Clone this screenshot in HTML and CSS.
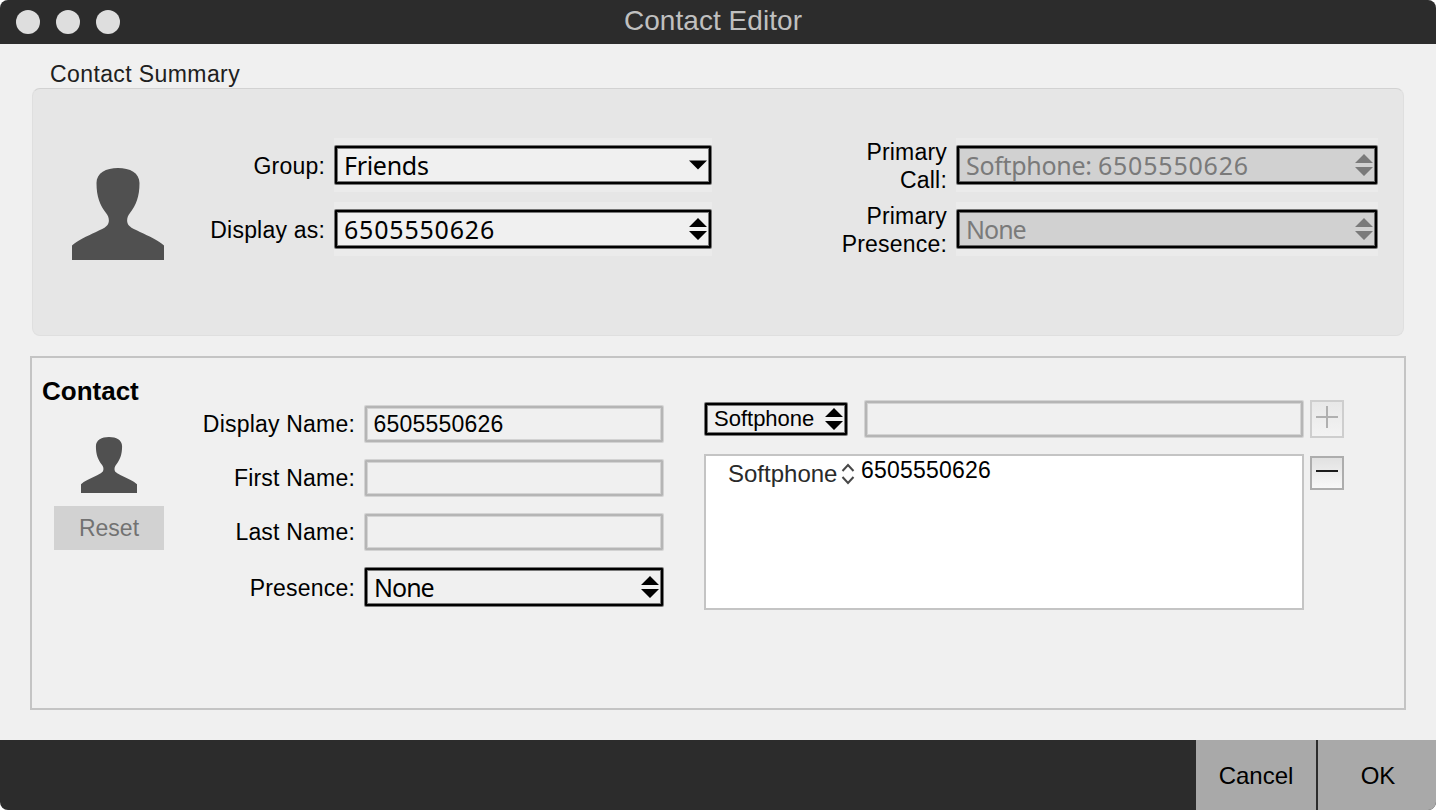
FILE: index.html
```html
<!DOCTYPE html>
<html lang="en">
<head>
<meta charset="utf-8">
<title>Contact Editor</title>
<link rel="stylesheet" href="styles.css">
</head>
<body>
<svg class="defs" width="0" height="0">
  <symbol id="person" viewBox="0 0 92 92">
    <path d="M46 0C58 0 67.500 5 67.500 15C67.500 29 64 37 58 45C54.500 49 54 55 57.500 58C60 60.500 63 61.500 68 64C77 68 87 73 92 77.500V92H0V77.500C5 73 15 68 24 64C29 61.500 32 60.500 34.500 58C38 55 37.500 49 34 45C28 37 24.500 29 24.500 15C24.500 5 34 0 46 0Z" fill="#505050"/>
  </symbol>
  <symbol id="updown" viewBox="0 0 18 22">
    <path d="M0 9L9 0L18 9ZM0 13H18L9 22Z" fill="currentColor"/>
  </symbol>
</svg>
<div class="window">
  <header class="titlebar">
    <div class="lights"><i class="light"></i><i class="light"></i><i class="light"></i></div>
    <h1 class="title">Contact Editor</h1>
  </header>
  <main class="content">
    <h2 class="summary-title">Contact Summary</h2>
    <section class="summary">
      <svg class="avatar"><use href="#person"/></svg>
      <div class="fields fields-left">
        <div class="row"><span class="label">Group:</span><div class="halo"><div class="select"><span class="word">Friends</span><svg class="arrow down" viewBox="0 0 18 10"><path d="M0 .5H18L9 9.500Z" fill="#000"/></svg></div></div></div>
        <div class="row"><span class="label">Display as:</span><div class="halo"><div class="select"><span>6505550626</span><svg class="arrow"><use href="#updown"/></svg></div></div></div>
      </div>
      <div class="fields fields-right">
        <div class="row"><span class="label">Primary<br>Call:</span><div class="halo"><div class="select disabled"><span><span class="word">Softphone: </span>6505550626</span><svg class="arrow"><use href="#updown"/></svg></div></div></div>
        <div class="row"><span class="label">Primary<br>Presence:</span><div class="halo"><div class="select disabled"><span class="none">None</span><svg class="arrow"><use href="#updown"/></svg></div></div></div>
      </div>
    </section>
    <section class="contact">
      <div class="profile">
        <h2 class="contact-title">Contact</h2>
        <svg class="avatar-small"><use href="#person"/></svg>
        <div class="reset">Reset</div>
      </div>
      <div class="details">
        <div class="detail"><span class="label">Display Name:</span><div class="input">6505550626</div></div>
        <div class="detail"><span class="label">First Name:</span><div class="input"></div></div>
        <div class="detail"><span class="label">Last Name:</span><div class="input"></div></div>
        <div class="detail"><span class="label">Presence:</span><div class="select"><span class="none">None</span><svg class="arrow"><use href="#updown"/></svg></div></div>
      </div>
      <div class="numbers">
        <div class="number-entry">
          <div class="select type"><span>Softphone</span><svg class="arrow"><use href="#updown"/></svg></div>
          <div class="input"></div>
          <div class="tool add"><svg viewBox="0 0 30 34"><path d="M4 15H26M15 4V26" stroke="#b0b0b0" stroke-width="2"/></svg></div>
        </div>
        <div class="number-list">
          <div class="list">
            <span class="list-type">Softphone</span>
            <svg class="chevrons" viewBox="0 0 14 22"><path d="M1.500 8L7 2L12.500 8M1.500 14L7 20L12.500 14" fill="none" stroke="#484848" stroke-width="2"/></svg>
            <span class="list-number">6505550626</span>
          </div>
          <div class="tool remove"><svg viewBox="0 0 30 30"><path d="M4 13H26" stroke="#1c1c1c" stroke-width="2"/></svg></div>
        </div>
      </div>
    </section>
  </main>
  <footer class="footer">
    <div class="button">Cancel</div>
    <div class="button ok">OK</div>
  </footer>
</div>
</body>
</html>
```

FILE: styles.css
```css
* { box-sizing: border-box; }
body {
  margin: 0;
  background: #fff;
  color: #000;
  font-family: "Liberation Sans", Arial, sans-serif;
  font-size: 23px;
  letter-spacing: .2px;
}
h1, h2 { margin: 0; font-weight: normal; }
svg { display: block; flex: none; }
.defs { position: absolute; }
.window {
  width: 1436px;
  height: 810px;
  display: flex;
  flex-direction: column;
  overflow: hidden;
  border-radius: 8px;
  background: #f0f0f0;
}
.titlebar {
  height: 44px;
  display: grid;
  grid-template-columns: 200px 1fr 200px;
  align-items: center;
  background: #2c2c2c;
}
.lights { display: flex; gap: 16px; padding-left: 16px; }
.light { width: 24px; height: 24px; border-radius: 50%; background: #dedede; }
.title {
  padding: 0 10px 2px 0;
  text-align: center;
  font-size: 28px;
  line-height: 30px;
  letter-spacing: .05px;
  color: #c0c0c0;
}
.content { height: 696px; padding: 17px 30px 30px; }
.summary-title {
  height: 27px;
  padding-left: 20px;
  font-size: 23px;
  line-height: 27px;
  letter-spacing: .4px;
  color: #202020;
}
.summary {
  display: flex;
  height: 248px;
  margin: 0 2px 20px;
  padding-top: 49px;
  border: 1px solid #dfdfdf;
  border-top-color: #d2d2d2;
  border-radius: 8px;
  background: #e6e6e6;
}
.avatar { width: 92px; height: 92px; margin: 30px 0 0 39px; }
.fields { display: flex; flex-direction: column; gap: 10px; }
.fields-left { width: 548px; }
.fields-right { width: 545px; margin-left: 121px; }
.row { display: flex; height: 54px; align-items: center; }
.label { flex: 1; text-align: right; padding: 1px 9px 0 0; line-height: 28px; }
.halo { flex: none; padding: 7px 0; background: #ebebeb; }
.fields-left .halo { width: 378px; }
.fields-right .halo { width: 422px; }
.select {
  display: flex;
  height: 38px;
  margin: 1px;
  padding: 0 2px 0 7px;
  align-items: center;
  justify-content: space-between;
  border: 2px solid #000;
  border-radius: 1px;
  background: #f0f0f0;
  box-shadow: 0 0 0 1px rgba(0, 0, 0, .5), inset 0 0 0 1px rgba(0, 0, 0, .5);
  font-family: "Noto Sans", sans-serif;
  font-size: 25px;
  line-height: 34px;
  letter-spacing: .8px;
}
.select.disabled { background: #d1d1d1; color: #7a7a7a; }
.word { letter-spacing: -.3px; }
.none { letter-spacing: -1px; }
.arrow { width: 18px; height: 22px; }
.arrow.down { height: 10px; }
.contact {
  display: flex;
  height: 354px;
  border: 2px solid #c4c4c4;
}
.profile { width: 152px; padding-top: 18px; }
.contact-title {
  padding-left: 10px;
  font-size: 26px;
  line-height: 30px;
  font-weight: bold;
  letter-spacing: 0;
}
.avatar-small { width: 56px; height: 56px; margin: 31px 0 13px 49px; }
.reset {
  width: 110px;
  height: 44px;
  margin-left: 22px;
  line-height: 45px;
  text-align: center;
  letter-spacing: 0;
  background: #d2d2d2;
  color: #727272;
}
.details { width: 480px; padding-top: 47px; display: flex; flex-direction: column; gap: 16.500px; }
.detail { display: flex; height: 37.500px; align-items: center; }
.detail .input, .detail .select { width: 298px; flex: none; }
.detail:last-child { height: 40px; }
.input {
  height: 35.500px;
  margin: 1px;
  padding-left: 6.500px;
  line-height: 33px;
  border: 2px solid #b5b5b5;
  border-radius: 1px;
  box-shadow: 0 0 0 1px rgba(181, 181, 181, .5), inset 0 0 0 1px rgba(181, 181, 181, .5);
}
.numbers { width: 640px; margin-left: 40px; padding-top: 42px; }
.number-entry { display: flex; align-items: center; height: 38px; }
.type {
  width: 142px;
  height: 32px;
  font-family: "Liberation Sans", Arial, sans-serif;
  font-size: 22px;
  letter-spacing: 0;
}
.number-entry .input { flex: none; width: 438px; margin-left: 17px; }
.tool { width: 34px; flex: none; border: 2px solid #adadad; background: linear-gradient(#e1e1e1, #f8f8f8); }
.add { height: 38px; margin-left: 6px; border-color: #cecece; background: linear-gradient(#e8e8e8, #f3f3f3); }
.remove { height: 34px; margin: 2px 0 0 6px; }
.number-list { display: flex; align-items: flex-start; margin-top: 16px; }
.list {
  display: flex;
  width: 600px;
  height: 156px;
  padding-left: 22px;
  border: 2px solid #c4c4c4;
  background: #fff;
}
.list-type { width: 113px; padding-top: 4px; font-size: 24px; line-height: 28px; letter-spacing: 0; color: #2a2a2a; }
.chevrons { width: 14px; height: 22px; margin-top: 7px; }
.list-number { padding-left: 6px; line-height: 29px; }
.footer { display: flex; height: 70px; justify-content: flex-end; gap: 2px; background: #2c2c2c; }
.button { width: 120px; background: #a9a9a9; text-align: center; font-size: 24px; line-height: 71px; letter-spacing: 0; }
.ok { width: 118px; padding-left: 2px; }
```
